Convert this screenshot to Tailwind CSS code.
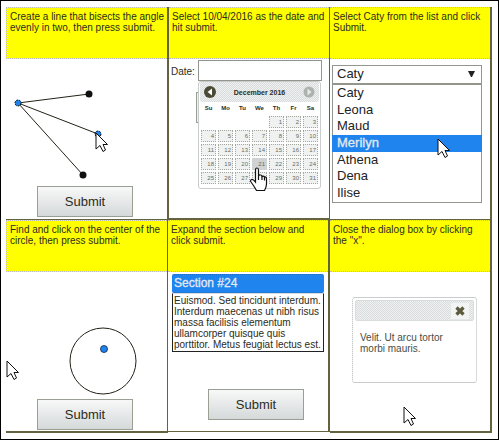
<!DOCTYPE html>
<html lang="en">
<head>
<meta charset="utf-8">
<title>Mini tasks</title>
<script src="https://cdn.jsdelivr.net/npm/@tailwindcss/browser@4"></script>
</head>
<body class="w-[499px] h-[440px] overflow-hidden bg-white border border-black pl-[5px] pt-[6px] font-['Liberation_Sans',Arial,sans-serif] text-[10px] leading-[11px] text-[#2c2c20]">
<svg class="hidden">
  <symbol id="arrow" viewBox="0 0 14 21"><path d="M1 1V17L5 13.5L8 19.5L10.5 18L8 12.5H12.5Z" fill="#fff" stroke="#111" stroke-width="1"/></symbol>
  <symbol id="hand" viewBox="0 0 19 25"><path d="M6.500 15V3Q6.500 1 8 1Q9.500 1 9.500 3V9Q10 7.500 11.500 8Q13 8 13 9.500Q14.500 8.500 15.500 10Q17.500 9.500 17.500 12V17Q17.500 20 15.500 23.500H7.500Q5 19 2 15Q1 13 2.500 12.500Q4 12 6.500 15Z" fill="#fff" stroke="#111" stroke-width="1.200"/><path d="M9.500 9V13M13 9.500V13M15.500 10V13.500" stroke="#111" stroke-width="1.200"/></symbol>
</svg>

<div class="flex h-[213px]">
  <section class="relative w-[163px] border-r-2 border-b border-[#636340] flex flex-col">
    <p class="h-[52px] shrink-0 bg-[#ff0] border border-dotted border-[#bbb] border-r-0 pt-[3px] pl-[3px] whitespace-nowrap">Create a line that bisects the angle<br>evenly in two, then press submit.</p>
    <svg class="w-[160px] h-[127px] shrink-0" viewBox="6 59 160 127">
      <path d="M89 94L18 103L98 134M18 103L83 175" fill="none" stroke="#222218" stroke-width="1"/>
      <circle cx="89" cy="94" r="3.500" fill="#111"/><circle cx="83" cy="175" r="3.500" fill="#111"/>
      <g fill="#2084ee" stroke="#111" stroke-dasharray="2 1"><circle cx="18" cy="103" r="3"/><circle cx="98" cy="134" r="3"/></g>
    </svg>
    <button class="ml-[31px] w-[96px] h-[31px] shrink-0 border border-[#9a9f94] bg-linear-to-b from-[#f8f8f8] to-[#d5d9da] text-[13px] leading-none">Submit</button>
    <svg class="absolute left-[89px] top-[125px] w-[14px] h-[21px]"><use href="#arrow"/></svg>
  </section>

  <section class="relative w-[161px] border-r border-b-2 border-[#636340] flex flex-col">
    <p class="h-[52px] shrink-0 bg-[#ff0] border-y border-dotted border-[#bbb] pt-[3px] pl-[3px] whitespace-nowrap">Select 10/04/2016 as the date and<br>hit submit.</p>
    <div class="flex mt-px pl-[2px] items-center"><span class="w-[27px] pt-[2px]">Date:</span><span class="w-[124px] h-[21px] border border-[#92968c] bg-white"></span></div>
    <div class="absolute left-[27px] top-[85px] w-[20px] h-[31px] border border-[#9a9f94] bg-[#eee]"></div>
    <div class="relative ml-[29px] w-[123px] h-[108px] bg-white border border-[#c8cccc] rounded-[3px] px-px flex flex-col">
      <div class="flex items-center justify-between h-[20px] px-[4px] rounded-[2px] bg-[repeating-conic-gradient(#d8dcdd_0_25%,#f0f2f2_0_50%)] bg-[length:2px_2px] text-[7px] font-bold">
        <svg class="w-[12px] h-[12px]" viewBox="0 0 12 12"><circle cx="6" cy="6" r="6" fill="#4b4a36"/><path d="M8 2.500V9.500L3.500 6Z" fill="#fff"/></svg>
        <span class="whitespace-nowrap">December 2016</span>
        <svg class="w-[12px] h-[12px]" viewBox="0 0 12 12"><circle cx="6" cy="6" r="5.500" fill="#aeb2ac"/><path d="M4.500 2.500V9.500L8.500 6Z" fill="#e8eaea"/></svg>
      </div>
      <div class="grid grid-cols-[repeat(7,17px)] h-[14px] text-[6px] font-bold leading-[13px] text-center"><span>Su</span><span>Mo</span><span>Tu</span><span>We</span><span>Th</span><span>Fr</span><span>Sa</span></div>
      <div id="days" class="grid grid-cols-[repeat(7,15px)] auto-rows-[12px] gap-x-[2px] gap-y-[2px] pl-px text-[6px] leading-[10px] text-right text-[#666b60]"></div>
    </div>
    <svg class="absolute left-[80px] top-[160px] w-[19px] h-[25px]"><use href="#hand"/></svg>
  </section>

  <section class="relative w-[162px] border-r-2 border-b border-[#636340] flex flex-col">
    <p class="h-[52px] shrink-0 bg-[#ff0] border-y border-dotted border-[#bbb] pt-[3px] pl-[3px] whitespace-nowrap">Select Caty from the list and click<br>Submit.</p>
    <div class="mt-[6px] ml-[2px] w-[150px] text-[13px] leading-[16.67px] text-[#222]">
      <div class="h-[19px] border border-[#92968c] pl-[4px] pr-[6px] flex items-center justify-between"><span>Caty</span><svg class="w-[7px] h-[6px] mb-[2px]" viewBox="0 0 7 6"><path d="M0 0H7L4 6H3Z" fill="#222"/></svg></div>
      <ul class="h-[119px] border border-[#92968c] *:pl-[4px]">
        <li>Caty</li><li>Leona</li><li>Maud</li><li class="bg-[#2084ee] text-[#e4eaee] -mx-px pl-[5px]! [-webkit-text-stroke:0.3px_#e4eaee]">Merilyn</li><li>Athena</li><li>Dena</li><li>Ilise</li>
      </ul>
    </div>
    <svg class="absolute left-[107px] top-[131px] w-[14px] h-[21px]"><use href="#arrow"/></svg>
  </section>
</div>

<div class="flex h-[213px]">
  <section class="relative w-[162px] border-r border-b-2 border-[#636340] flex flex-col">
    <p class="h-[52px] shrink-0 bg-[#ff0] border border-dotted border-[#bbb] border-r-0 pt-[3px] pl-[3px] whitespace-nowrap">Find and click on the center of the<br>circle, then press submit.</p>
    <svg class="w-[160px] h-[127px] shrink-0" viewBox="6 272 160 127">
      <circle cx="103" cy="361" r="33" fill="none" stroke="#222218"/>
      <circle cx="104" cy="349" r="3.500" fill="#2084ee" stroke="#124" stroke-width=".8"/>
    </svg>
    <button class="ml-[31px] w-[96px] h-[31px] shrink-0 border border-[#9a9f94] bg-linear-to-b from-[#f8f8f8] to-[#d5d9da] text-[13px] leading-none">Submit</button>
    <svg class="absolute left-0 top-[140px] w-[14px] h-[21px]"><use href="#arrow"/></svg>
  </section>

  <section class="w-[162px] border-r-2 border-b border-[#636340] flex flex-col h-[212px]">
    <p class="h-[52px] shrink-0 bg-[#ff0] border-y border-dotted border-[#bbb] pt-[3px] pl-[3px] whitespace-nowrap">Expand the section below and<br>click submit.</p>
    <h3 class="mt-[2px] ml-[4px] w-[152px] h-[19px] rounded-[2px] bg-[#2084ee] border-y border-dotted border-[#1c6fc8] pl-[2px] text-[12px] leading-[17px] text-[#e4eaee] [-webkit-text-stroke:0.3px_#e4eaee]">Section #24</h3>
    <div class="ml-[4px] w-[152px] h-[59px] border border-[#222] border-t-[#ddd] pl-px pt-px whitespace-nowrap leading-[11.1px]">Euismod. Sed tincidunt interdum.<br>Interdum maecenas ut nibh risus<br>massa facilisis elementum<br>ullamcorper quisque quis<br>porttitor. Metus feugiat lectus est.</div>
    <button class="mt-[37px] ml-[40px] w-[96px] h-[31px] shrink-0 border border-[#9a9f94] bg-linear-to-b from-[#f8f8f8] to-[#d5d9da] text-[13px] leading-none">Submit</button>
  </section>

  <section class="relative w-[162px] border-r-2 border-b-2 border-[#636340] flex flex-col">
    <p class="h-[52px] shrink-0 bg-[#ff0] border-y border-dotted border-[#bbb] pt-[3px] pl-[3px] whitespace-nowrap">Close the dialog box by clicking<br>the "x".</p>
    <div class="mt-[25px] ml-[22px] w-[125px] h-[86px] border border-[#c8cccc] border-x-[#b4b8b4] [border-inline-style:dotted] rounded-[3px] p-[2px]">
      <div class="h-[21px] rounded-[2px] bg-[repeating-conic-gradient(#d8dcdd_0_25%,#f0f2f2_0_50%)] bg-[length:2px_2px] border border-[#d8dcdc] flex justify-end items-center pr-[3px]">
        <span class="w-[20px] h-[18px] bg-[#f2f4f4] border border-dotted border-[#d8dcdc] rounded-[2px] grid place-items-center"><svg class="w-[10px] h-[10px]" viewBox="0 0 10 10"><path d="M1.500 1.500L8.500 8.500M8.500 1.500L1.500 8.500" stroke="#5c5b3e" stroke-width="3.200"/></svg></span>
      </div>
      <p class="pl-[5px] pt-[11px] text-[#4a4d44]">Velit. Ut arcu tortor<br>morbi mauris.</p>
    </div>
    <svg class="absolute left-[73px] top-[186px] w-[14px] h-[21px]"><use href="#arrow"/></svg>
  </section>
</div>
<script>
const grid = document.getElementById('days');
for (let d = 1; d <= 31; d++) {
  const c = document.createElement('span');
  c.textContent = d;
  c.className = 'border border-dotted border-[#a4a89f] bg-[#f0f2f2] pr-px';
  if (d === 1) c.classList.add('col-start-5');
  if (d === 21) c.className = 'border border-[#cfd3d3] bg-[#cfd3d3] pr-px';
  grid.appendChild(c);
}
</script>
</body>
</html>
